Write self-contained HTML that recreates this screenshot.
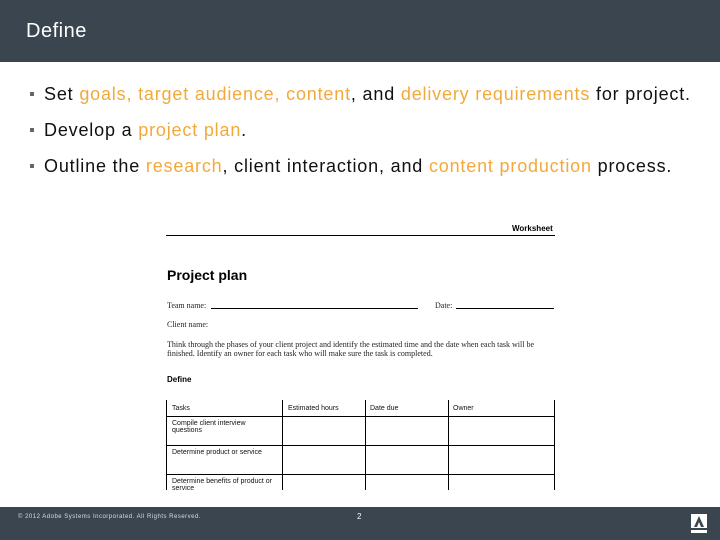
<!DOCTYPE html>
<html><head><style>
body{margin:0;width:720px;height:540px;position:relative;background:#fff;font-family:"Liberation Sans",sans-serif;overflow:hidden}
.hd{position:absolute;left:0;top:0;width:720px;height:62px;background:#3a4550}
.hd span{position:absolute;left:26px;top:20px;color:#fff;font-size:20px;letter-spacing:0.5px}
.ft{position:absolute;left:0;top:507px;width:720px;height:33px;background:#3a4550}
.b{position:absolute;left:30px;font-size:18px;color:#111;white-space:nowrap;letter-spacing:0.82px}
.b i{font-style:normal;position:absolute;left:0;top:8px;width:4px;height:4px;background:#666}
.b span{position:absolute;left:14px;top:0}
.o{color:#f2a93b;font-weight:normal}
.a{position:absolute;color:#000}
.ser{font-family:"Liberation Serif",serif;font-size:8px;color:#222}
.ln{position:absolute;background:#000;height:1px}
.vl{position:absolute;background:#000;width:1px;top:400px;height:90px}
.c{position:absolute;font-size:7px;color:#111;line-height:7px}
</style></head><body>
<div class="hd"><span>Define</span></div>
<div class="b" style="top:84px"><i></i><span>Set <b class="o">goals, target audience, content</b>, and <b class="o">delivery requirements</b> for project.</span></div>
<div class="b" style="top:120px"><i></i><span>Develop a <b class="o">project plan</b>.</span></div>
<div class="b" style="top:156px"><i></i><span>Outline the <b class="o">research</b>, client interaction, and <b class="o">content production</b> process.</span></div>

<div class="a" style="left:512px;top:224px;font-size:8px;font-weight:bold">Worksheet</div>
<div class="ln" style="left:166px;top:235px;width:389px"></div>
<div class="a" style="left:167px;top:267px;font-size:14px;font-weight:bold">Project plan</div>
<div class="a ser" style="left:167px;top:301px">Team name:</div>
<div class="ln" style="left:211px;top:308px;width:207px"></div>
<div class="a ser" style="left:435px;top:301px">Date:</div>
<div class="ln" style="left:456px;top:308px;width:98px"></div>
<div class="a ser" style="left:167px;top:320px">Client name:</div>
<div class="a ser" style="left:167px;top:340px;line-height:9px;width:400px">Think through the phases of your client project and identify the estimated time and the date when each task will be<br>finished. Identify an owner for each task who will make sure the task is completed.</div>
<div class="a" style="left:167px;top:375px;font-size:8px;font-weight:bold">Define</div>
<div class="vl" style="left:166px"></div><div class="vl" style="left:282px"></div><div class="vl" style="left:365px"></div><div class="vl" style="left:448px"></div><div class="vl" style="left:554px"></div>
<div class="ln" style="left:166px;top:416px;width:389px"></div>
<div class="ln" style="left:166px;top:445px;width:389px"></div>
<div class="ln" style="left:166px;top:474px;width:389px"></div>
<div class="c" style="left:172px;top:405px">Tasks</div>
<div class="c" style="left:288px;top:405px">Estimated hours</div>
<div class="c" style="left:370px;top:405px">Date due</div>
<div class="c" style="left:453px;top:405px">Owner</div>
<div class="c" style="left:172px;top:420px">Compile client interview<br>questions</div>
<div class="c" style="left:172px;top:449px">Determine product or service</div>
<div class="c" style="left:172px;top:478px">Determine benefits of product or<br>service</div>

<div class="ft"></div>
<div class="a" style="left:18px;top:514px;font-size:6px;color:#ddd;letter-spacing:0.5px">© 2012 Adobe Systems Incorporated. All Rights Reserved.</div>
<div class="a" style="left:357px;top:512px;font-size:8px;color:#fff">2</div>
<svg style="position:absolute;left:690px;top:514px" width="18" height="20" viewBox="0 0 18 20"><rect x="1" y="0" width="16" height="14" fill="#fff"/><path d="M9 2L4 13H7L9 8L11 13H14Z" fill="#3a4550"/><rect x="1" y="16" width="16" height="3" fill="#fff"/></svg>
</body></html>
